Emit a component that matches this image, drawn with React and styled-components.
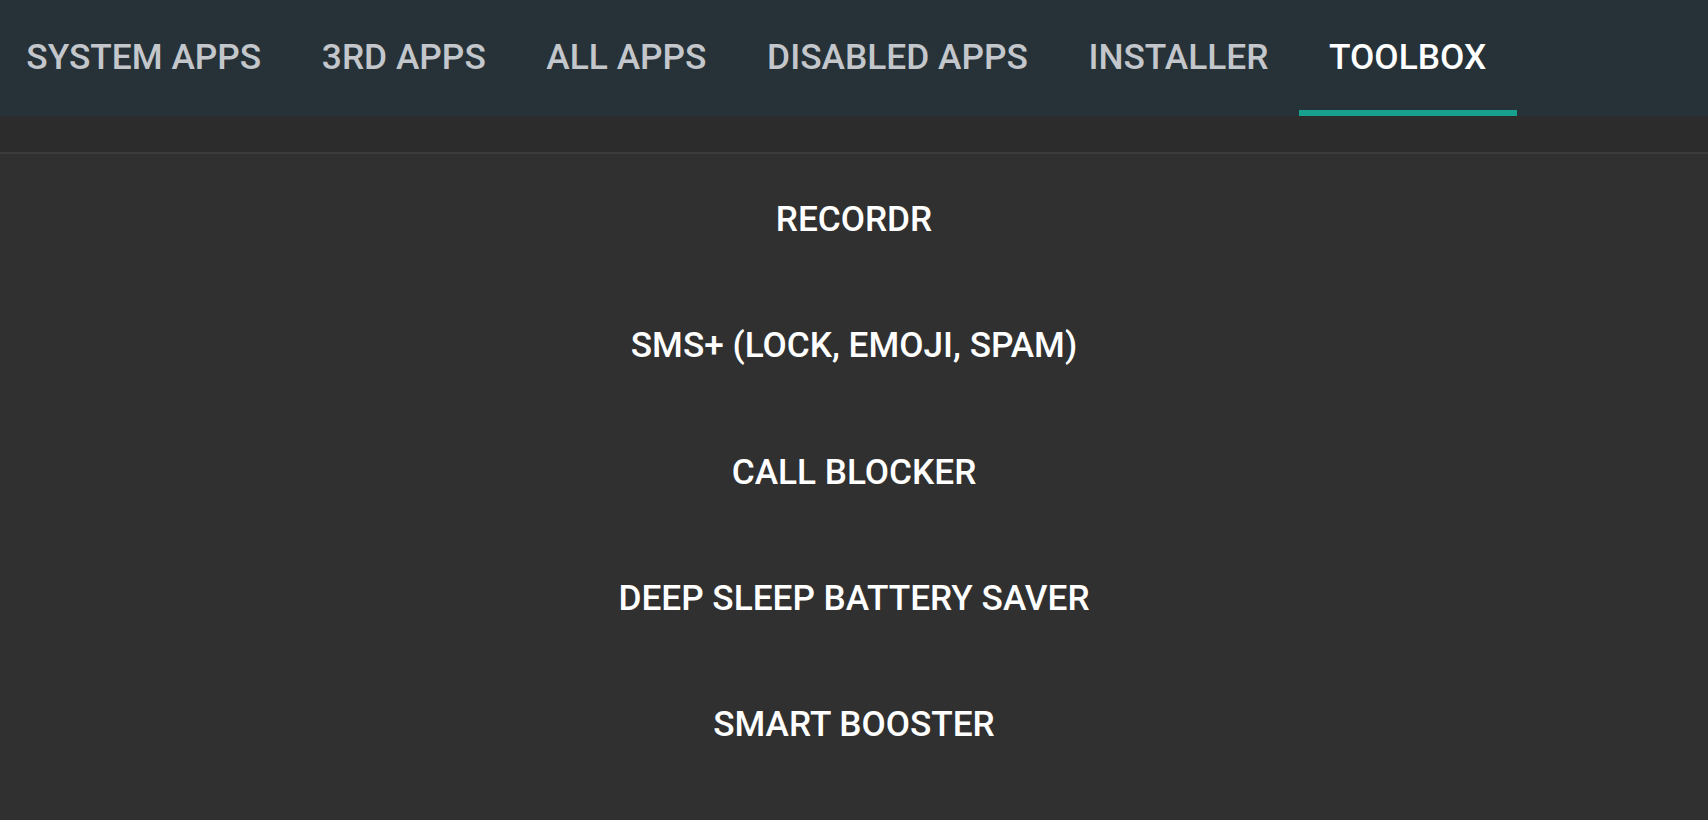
import React from 'react';
import styled, { createGlobalStyle } from 'styled-components';

const GlobalStyle = createGlobalStyle`
  html, body {
    margin: 0;
    padding: 0;
    background-color: #303030;
  }
  body {
    font-family: Roboto, "Noto Sans", "Liberation Sans", sans-serif;
  }
`;

// --- Styled Components ---

const Screen = styled.div`
  width: 100%;
  height: 820px;
  background-color: #303030;
  overflow: hidden;
`;

const TabBar = styled.div`
  display: flex;
  align-items: stretch;
  height: 116px;
  background-color: #263238;
  margin-left: -4px;
`;

const Tab = styled.div`
  position: relative;
  display: flex;
  align-items: center;
  justify-content: center;
  padding: 0 30.3px 2px;
  font-size: 35.3px;
  font-weight: 500;
  text-transform: uppercase;
  color: ${({ $active }) => ($active ? '#ffffff' : '#c3c7cb')};

  &::after {
    content: '';
    display: ${({ $active }) => ($active ? 'block' : 'none')};
    position: absolute;
    left: 0;
    right: 0;
    bottom: 0;
    height: 6px;
    background-color: #17a08b;
  }
`;

const Band = styled.div`
  height: 36px;
  background-color: #2c2c2c;
  border-bottom: 2px solid #3b3b3b;
`;

const ToolList = styled.div`
  display: flex;
  flex-direction: column;
  padding-top: 2px;
`;

const ToolButton = styled.div`
  display: flex;
  align-items: center;
  justify-content: center;
  height: 126.3px;
  font-size: 35.2px;
  font-weight: 500;
  color: #ffffff;
`;

// --- Component ---

const tabs = ['System apps', '3rd apps', 'All apps', 'Disabled apps', 'Installer', 'Toolbox'];

const tools = [
  'RECORDR',
  'SMS+ (LOCK, EMOJI, SPAM)',
  'CALL BLOCKER',
  'DEEP SLEEP BATTERY SAVER',
  'SMART BOOSTER',
];

export default function App() {
  return (
    <Screen>
      <GlobalStyle />
      <TabBar>
        {tabs.map((t) => (
          <Tab key={t} $active={t === 'Toolbox'}>
            {t}
          </Tab>
        ))}
      </TabBar>
      <Band />
      <ToolList>
        {tools.map((t) => (
          <ToolButton key={t}>{t}</ToolButton>
        ))}
      </ToolList>
    </Screen>
  );
}
